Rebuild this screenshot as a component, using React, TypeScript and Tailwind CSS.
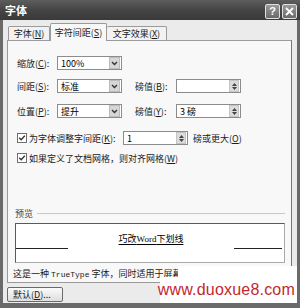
import React from "react";

const font = "font-['Noto_Sans_CJK_SC','Noto_Sans_CJK_SC',sans-serif]";

function U({ c }: { c: string }) {
  return (
    <>
      (<span className="underline underline-offset-1">{c}</span>)
    </>
  );
}

function Select({ value }: { value: string }) {
  return (
    <div className="w-[65px] h-[14px] border border-[#8c8c8c] bg-white flex items-center">
      <span className="flex-1 pl-[3px] text-[9px] leading-none text-black">{value}</span>
      <div className="w-[11px] h-[12px] mr-px bg-[#d6d6d6] border border-[#bcbcbc] flex items-center justify-center">
        <svg width="7" height="5" viewBox="0 0 7 5">
          <path d="M1 1 L3.5 3.5 L6 1" stroke="#333" strokeWidth="1.4" fill="none" />
        </svg>
      </div>
    </div>
  );
}

function Spin({ value, w = 65 }: { value: string; w?: number }) {
  return (
    <div
      className="h-[14px] border border-[#8c8c8c] bg-white flex items-center"
      style={{ width: w }}
    >
      <span className="flex-1 pl-[3px] text-[9px] leading-none text-black">{value}</span>
      <div className="w-[10px] h-[12px] mr-px bg-[#dcdcdc] border border-[#c4c4c4] flex flex-col items-center justify-center gap-px">
        <svg width="5" height="3" viewBox="0 0 5 3">
          <path d="M0 3 L2.5 0 L5 3Z" fill="#444" />
        </svg>
        <svg width="5" height="3" viewBox="0 0 5 3">
          <path d="M0 0 L2.5 3 L5 0Z" fill="#444" />
        </svg>
      </div>
    </div>
  );
}

function Check() {
  return (
    <div className="w-[10px] h-[10px] border border-[#6e6e6e] bg-white flex items-center justify-center">
      <svg width="8" height="8" viewBox="0 0 8 8">
        <path d="M1.2 3.8 L3.2 5.8 L6.8 1.8" stroke="#333" strokeWidth="1.3" fill="none" />
      </svg>
    </div>
  );
}

export default function App() {
  return (
    <div
      className={`relative w-[300px] h-[308px] overflow-hidden bg-[#6a6a6a] flex flex-col text-[9px] leading-none text-[#1a1a1a] ${font}`}
    >
      {/* title bar */}
      <div className="h-[20px] flex items-center bg-gradient-to-b from-[#5e5e5e] via-[#454545] to-[#3a3a3a] pl-[5px] pr-[3px]">
        <span className="text-white font-bold text-[11px] flex-1">字体</span>
        <div className="flex gap-[2px] mt-[3px]">
          <div className="w-[15px] h-[15px] rounded-[2px] border border-[#e0e0e0] bg-gradient-to-b from-[#9a9a9a] to-[#6a6a6a] flex items-center justify-center text-white text-[11px] font-bold font-['Liberation_Sans',sans-serif]">
            ?
          </div>
          <div className="w-[15px] h-[15px] rounded-[2px] border border-[#e0e0e0] bg-gradient-to-b from-[#9a9a9a] to-[#6a6a6a] flex items-center justify-center">
            <svg width="9" height="9" viewBox="0 0 9 9">
              <path d="M1 1 L8 8 M8 1 L1 8" stroke="white" strokeWidth="1.8" />
            </svg>
          </div>
        </div>
      </div>

      {/* body */}
      <div className="flex-1 mx-[3px] mb-[5px] bg-[#ebebeb] pl-[4px] pt-[3px] flex flex-col">
        {/* tabs */}
        <div className="h-[17px] flex items-end">
          <div className="ml-px w-[42px] h-[14px] border border-b-0 border-[#9a9a9a] rounded-t-[2px] bg-[#f2f2f2] flex items-center justify-center">
            字体<U c="N" />
          </div>
          <div className="relative z-10 -mb-px w-[57px] h-[18px] border border-b-0 border-[#9a9a9a] rounded-t-[2px] bg-[#f8f8f8] flex items-center justify-center">
            字符间距<U c="S" />
          </div>
          <div className="w-[60px] h-[14px] border border-b-0 border-l-0 border-[#9a9a9a] rounded-t-[2px] bg-[#f2f2f2] flex items-center justify-center">
            文字效果<U c="X" />
          </div>
        </div>

        {/* panel */}
        <div className="w-[285px] h-[243px] border border-[#9a9a9a] border-r-[#777] bg-[#f8f8f8] flex flex-col">
          <div className="pl-[9px] pt-[15px] flex flex-col">
            <div className="flex items-center h-[14px]">
              <span className="w-[40px]">缩放<U c="C" />:</span>
              <Select value="100%" />
            </div>
            <div className="flex items-center h-[14px] mt-[9px]">
              <span className="w-[40px]">间距<U c="S" />:</span>
              <Select value="标准" />
              <span className="ml-[13px] w-[41px]">磅值<U c="B" />:</span>
              <Spin value="" />
            </div>
            <div className="flex items-center h-[14px] mt-[11px]">
              <span className="w-[40px]">位置<U c="P" />:</span>
              <Select value="提升" />
              <span className="ml-[13px] w-[41px]">磅值<U c="Y" />:</span>
              <Spin value="3 磅" />
            </div>
            <div className="flex items-center h-[14px] mt-[13px]">
              <div className="w-[106px] flex items-center gap-[2px]">
                <Check />
                <span>为字体调整字间距<U c="K" />:</span>
              </div>
              <Spin value="1" />
              <span className="ml-[5px]">磅或更大<U c="O" /></span>
            </div>
            <div className="flex items-center h-[14px] mt-[6px]">
              <div className="flex items-center gap-[2px]">
                <Check />
                <span>如果定义了文档网格，则对齐网格<U c="W" /></span>
              </div>
            </div>
          </div>

          {/* preview */}
          <div className="ml-[7px] mr-[6px] mt-[41px] h-[14px] flex items-center">
            <span className="text-[#444]">预览</span>
            <div className="flex-1 ml-[4px] border-t border-[#c8c8c8]" />
          </div>
          <div className="ml-[7px] mt-[3px] w-[270px] h-[40px] border border-[#5a5a5a] border-r-[#aaa] border-b-[#aaa] bg-white flex items-start">
            <div className="w-[52px] h-[25px] border-b border-[#222]" />
            <div className="flex-1 pt-[10px] flex justify-center">
              <span className="underline underline-offset-2 text-[9px] text-black">
                巧改<span className="font-['Liberation_Serif',serif] text-[9px]">Word</span>下划线
              </span>
            </div>
            <div className="w-[48px] mr-[2px] h-[25px] border-b border-[#222]" />
          </div>
          <div className="ml-[5px] mt-[6px] whitespace-nowrap">
            这是一种 <span className="font-['Liberation_Mono',monospace] text-[8px]">TrueType</span> 字体，同时适用于屏幕和打印机。
          </div>
        </div>

        {/* bottom button */}
        <div className="mt-[4px] w-[56px] h-[15px] border border-[#6a6a6a] rounded-[2px] bg-gradient-to-b from-[#fafafa] to-[#dedede] flex items-center pl-[5px]">
          默认<U c="D" />...
        </div>
      </div>

      {/* watermark */}
      <div className="absolute left-[178px] top-[266px] w-[119px] h-[11px] bg-white" />
      <div className="absolute left-[160px] top-[277px] w-[137px] h-[26px] bg-white flex items-center justify-end pr-[2px]">
        <span className="font-['Liberation_Sans',sans-serif] text-[16px] leading-none text-[#c4282c] tracking-[0.2px]">
          www.duoxue8.com
        </span>
      </div>
    </div>
  );
}
